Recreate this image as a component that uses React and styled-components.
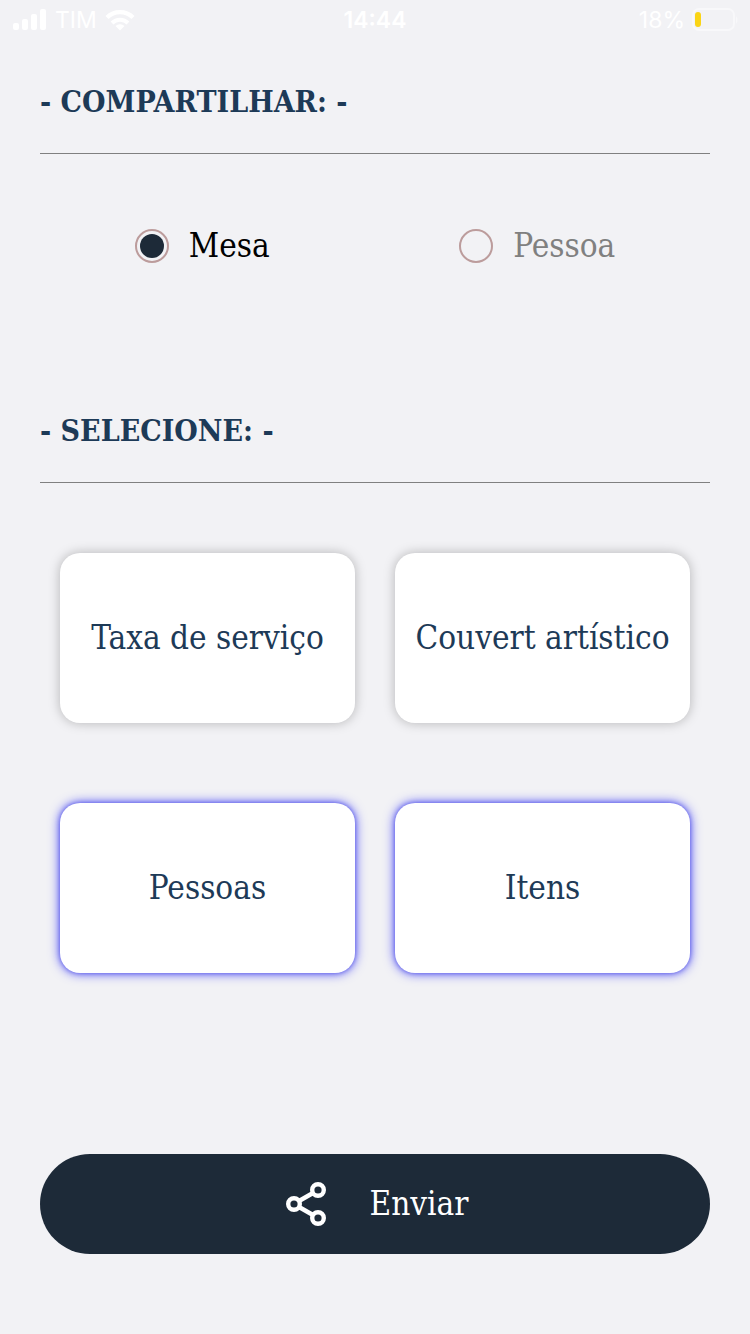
import React, { useState } from "react";
import styled, { createGlobalStyle } from "styled-components";

const GlobalStyle = createGlobalStyle`
  * { box-sizing: border-box; }
  body {
    margin: 0;
    background: #f2f2f5;
    font-family: "Roboto Slab", "DejaVu Serif Condensed", "DejaVu Serif", serif;
    font-size: 33px;
    line-height: 40px;
  }
`;

const Screen = styled.div`
  min-height: 100vh;
  display: flex;
  flex-direction: column;
`;

const StatusBar = styled.header`
  height: 40px;
  padding: 0 12px;
  display: grid;
  grid-template-columns: 1fr auto 1fr;
  align-items: center;
  color: #ffffff;
  font-family: Inter, "Liberation Sans", sans-serif;
  font-size: 23px;
  line-height: 40px;
`;

const StatusGroup = styled.div`
  display: flex;
  align-items: center;
  justify-content: ${({ $end }) => ($end ? "flex-end" : "flex-start")};
  gap: 7px;

  svg { display: block; }
`;

const Clock = styled.time`
  font-weight: 600;
`;

const Main = styled.main`
  flex: 1;
  display: flex;
  flex-direction: column;
  padding: 42px 40px 80px;
`;

const Title = styled.h2`
  margin: 0;
  padding-bottom: 31px;
  border-bottom: 1px solid #808080;
  color: #1d3a57;
  font-size: 30px;
  font-weight: 700;
  line-height: 40px;
`;

const RadioGroup = styled.div`
  display: flex;
  justify-content: space-around;
  padding: 72px 0 145px;
`;

const Option = styled.label`
  display: flex;
  align-items: center;
  gap: 20px;
  color: #808080;
  cursor: pointer;

  &:has(input:checked) { color: #000000; }
`;

const Radio = styled.input`
  appearance: none;
  width: 34px;
  height: 34px;
  margin: 0;
  padding: 3px;
  border: 2px solid #bc9c9c;
  border-radius: 50%;
  background-clip: content-box;

  &:checked { background-color: #1d2a38; }
`;

const CardGrid = styled.div`
  display: grid;
  grid-template-columns: 1fr 1fr;
  gap: 80px 40px;
  padding: 70px 20px;
`;

const Card = styled.button`
  height: 170px;
  padding: 0;
  border: 0;
  border-radius: 20px;
  background: #ffffff;
  color: #1d3a57;
  font: inherit;
  white-space: nowrap;
  cursor: pointer;
  box-shadow: ${({ $selected }) =>
    $selected
      ? "0 0 5px rgba(0, 0, 200, 0.4), 0 0 12px rgba(0, 0, 255, 0.7)"
      : "0 0 12px rgba(0, 0, 0, 0.26)"};
`;

const SendButton = styled.button`
  display: flex;
  align-items: center;
  justify-content: center;
  gap: 40px;
  height: 100px;
  margin-top: auto;
  border: 0;
  border-radius: 50px;
  background: #1d2a38;
  color: #ffffff;
  font: inherit;
  cursor: pointer;
`;

const SignalIcon = () => (
  <svg width="36" height="22" viewBox="0 0 36 22" fill="currentColor" aria-hidden="true">
    <rect x="1" y="14" width="6" height="7" rx="2" />
    <rect x="10" y="10" width="6" height="11" rx="2" />
    <rect x="19" y="5" width="6" height="16" rx="2" />
    <rect x="28" y="0" width="6" height="21" rx="2" />
  </svg>
);

const WifiIcon = () => (
  <svg width="32" height="22" viewBox="0 0 32 22" fill="none" stroke="currentColor" aria-hidden="true">
    <path d="M3 8.5a18.5 18.5 0 0 1 26 0" strokeWidth="4.4" />
    <path d="M8 14a11.5 11.5 0 0 1 16 0" strokeWidth="4" />
    <path d="M11.5 17a6.5 6.5 0 0 1 9 0L16 21.6z" fill="currentColor" stroke="none" />
  </svg>
);

const BatteryIcon = () => (
  <svg width="46" height="24" viewBox="0 0 46 24" fill="none" aria-hidden="true">
    <rect x="1" y="1" width="41" height="21" rx="6" stroke="#f8f8fa" strokeWidth="2" />
    <path d="M44 8q3 4 0 8z" fill="#f8f8fa" />
    <rect x="3" y="4" width="6" height="15" rx="3" fill="#fad415" />
  </svg>
);

const ShareIcon = () => (
  <svg width="48" height="48" viewBox="0 0 48 48" fill="none" stroke="currentColor" strokeWidth="4.4" aria-hidden="true">
    <circle cx="36" cy="10" r="5.8" />
    <circle cx="12" cy="24" r="5.8" />
    <circle cx="36" cy="38" r="5.8" />
    <path d="M17 21 31 13M17 27 31 35" />
  </svg>
);

const targets = ["Mesa", "Pessoa"];
const sections = ["Taxa de serviço", "Couvert artístico", "Pessoas", "Itens"];

export default function App() {
  const [target, setTarget] = useState("Mesa");
  const [selected, setSelected] = useState(["Pessoas", "Itens"]);

  const toggle = (name) =>
    setSelected((list) =>
      list.includes(name) ? list.filter((item) => item !== name) : [...list, name]
    );

  return (
    <>
      <GlobalStyle />
      <Screen>
        <StatusBar>
          <StatusGroup>
            <SignalIcon />
            <span>TIM</span>
            <WifiIcon />
          </StatusGroup>
          <Clock>14:44</Clock>
          <StatusGroup $end>
            <span>18%</span>
            <BatteryIcon />
          </StatusGroup>
        </StatusBar>
        <Main>
          <Title id="share-title">- COMPARTILHAR: -</Title>
          <RadioGroup role="radiogroup" aria-labelledby="share-title">
            {targets.map((name) => (
              <Option key={name}>
                <Radio
                  type="radio"
                  name="target"
                  value={name}
                  checked={target === name}
                  onChange={() => setTarget(name)}
                />
                {name}
              </Option>
            ))}
          </RadioGroup>
          <Title id="select-title">- SELECIONE: -</Title>
          <CardGrid role="group" aria-labelledby="select-title">
            {sections.map((name) => (
              <Card
                key={name}
                type="button"
                $selected={selected.includes(name)}
                aria-pressed={selected.includes(name)}
                onClick={() => toggle(name)}
              >
                {name}
              </Card>
            ))}
          </CardGrid>
          <SendButton type="button">
            <ShareIcon />
            Enviar
          </SendButton>
        </Main>
      </Screen>
    </>
  );
}
